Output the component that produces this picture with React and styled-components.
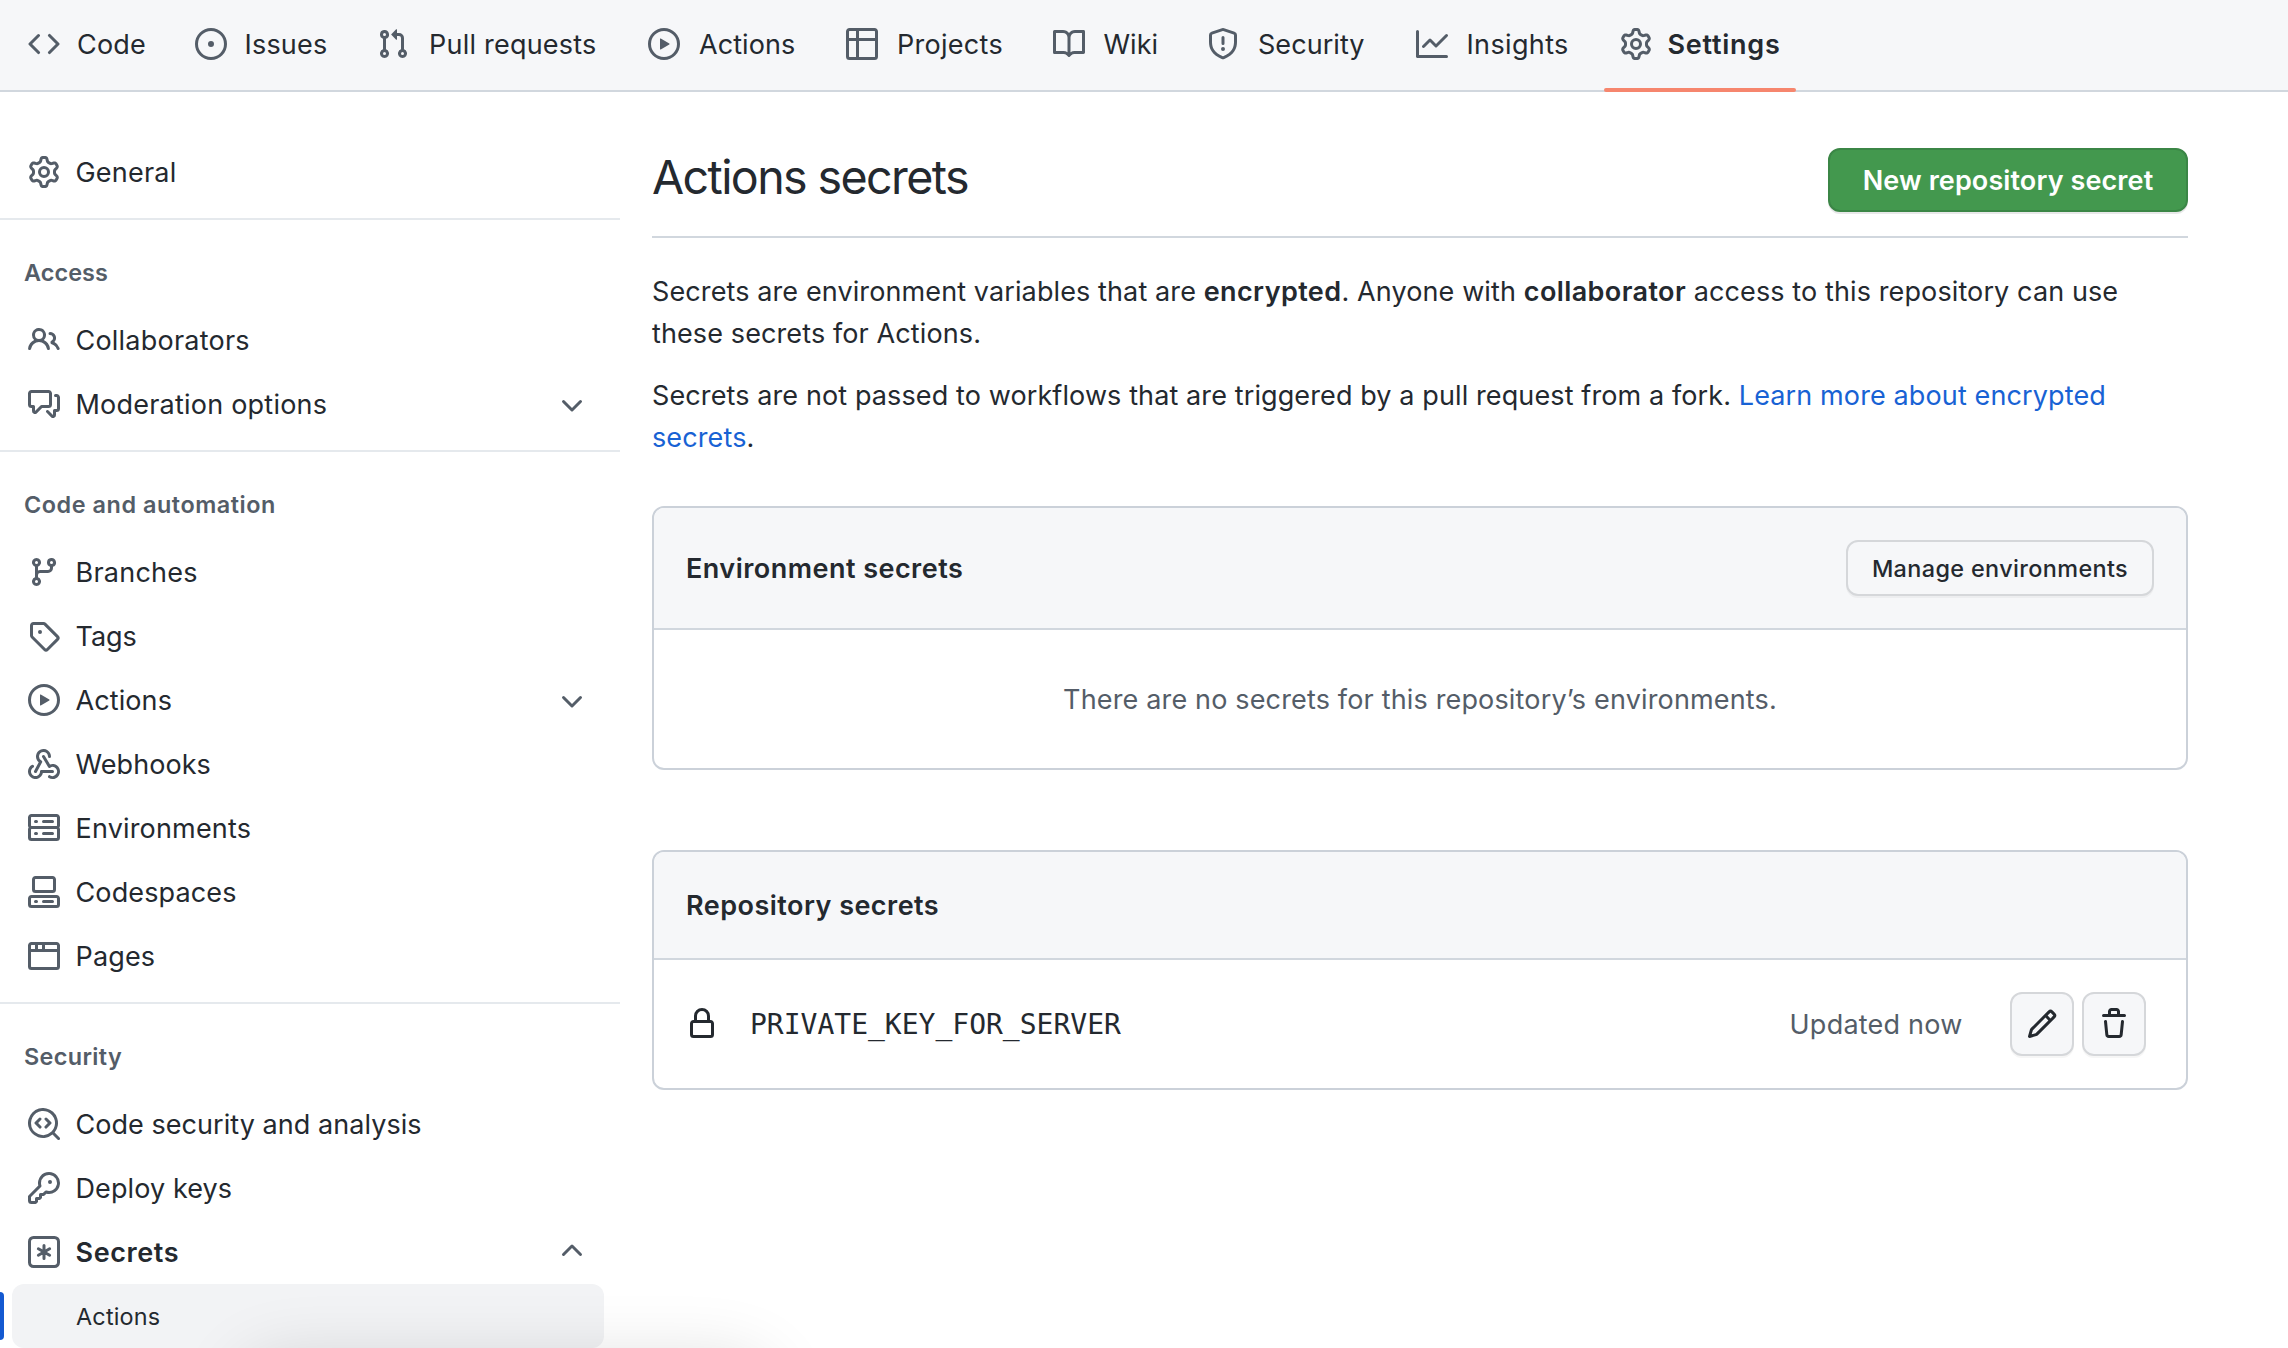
import React from "react";
import styled, { createGlobalStyle } from "styled-components";

const color = {
  text: "#24292f",
  muted: "#545d68",
  canvas: "#ffffff",
  subtle: "#f6f7f9",
  border: "#d1d7de",
  boxBorder: "#cbd1d9",
  divider: "#e5e9ed",
  link: "#1862d4",
  accent: "#1459d1",
  green: "#43984e",
  greenBorder: "#3b8646",
  coral: "#f6866e",
  control: "#d5d7da",
};

const sans = `Inter, "Liberation Sans", sans-serif`;
const mono = `"DejaVu Sans Mono", "Liberation Mono", monospace`;

const GlobalStyle = createGlobalStyle`
  *, *::before, *::after { box-sizing: border-box; }
  body {
    margin: 0;
    background: ${color.canvas};
    color: ${color.text};
    font: 400 27px/42px ${sans};
    overflow: hidden;
  }
  h1, h2, h3, p, ul { margin: 0; padding: 0; font-weight: inherit; font-size: inherit; }
  ul { list-style: none; }
  a { color: inherit; text-decoration: none; }
`;

/* ---------- icons (16 unit grid, drawn at 32px) ---------- */

const paths = {
  code: "M4.72 3.22a.75.75 0 011.06 1.06L2.06 8l3.72 3.72a.75.75 0 11-1.06 1.06L.47 8.53a.75.75 0 010-1.06l4.25-4.25zm6.56 0a.75.75 0 10-1.06 1.06L13.94 8l-3.72 3.72a.75.75 0 101.06 1.06l4.25-4.25a.75.75 0 000-1.06l-4.25-4.25z",
  issue: "M8 9.5a1.5 1.5 0 100-3 1.5 1.5 0 000 3zM8 0a8 8 0 100 16A8 8 0 008 0zM1.5 8a6.5 6.5 0 1113 0 6.5 6.5 0 01-13 0z",
  pull: "M7.177 3.073L9.573.677A.25.25 0 0110 .854v4.792a.25.25 0 01-.427.177L7.177 3.427a.25.25 0 010-.354zM3.75 2.5a.75.75 0 100 1.5.75.75 0 000-1.5zm-2.25.75a2.25 2.25 0 113 2.122v5.256a2.251 2.251 0 11-1.5 0V5.372A2.25 2.25 0 011.5 3.25zM11 2.5h-1V4h1a1 1 0 011 1v5.628a2.251 2.251 0 101.5 0V5A2.5 2.5 0 0011 2.5zm1 10.25a.75.75 0 111.5 0 .75.75 0 01-1.5 0zM3.75 12a.75.75 0 100 1.5.75.75 0 000-1.5z",
  play: "M1.5 8a6.5 6.5 0 1113 0 6.5 6.5 0 01-13 0zM8 0a8 8 0 100 16A8 8 0 008 0zM6.379 5.227A.25.25 0 006 5.442v5.117a.25.25 0 00.379.214l4.264-2.559a.25.25 0 000-.428L6.379 5.227z",
  table: "M0 1.75C0 .784.784 0 1.75 0h12.5C15.216 0 16 .784 16 1.75v12.5A1.75 1.75 0 0114.25 16H1.75A1.75 1.75 0 010 14.25V1.75zM1.5 6.5v7.75c0 .138.112.25.25.25H5v-8H1.5zM5 5V1.5H1.75a.25.25 0 00-.25.25V5H5zm1.5 1.5v8h7.75a.25.25 0 00.25-.25V6.5h-8zm8-1.5V1.75a.25.25 0 00-.25-.25H6.5V5h8z",
  book: "M0 1.75A.75.75 0 01.75 1h4.253c1.227 0 2.317.59 3 1.501A3.744 3.744 0 0111.006 1h4.245a.75.75 0 01.75.75v10.5a.75.75 0 01-.75.75h-4.507a2.25 2.25 0 00-1.591.659l-.622.621a.75.75 0 01-1.06 0l-.622-.621A2.25 2.25 0 005.258 13H.75a.75.75 0 01-.75-.75V1.75zm8.755 3a2.25 2.25 0 012.25-2.25H14.5v9h-3.757c-.71 0-1.4.201-1.992.572l.004-7.322zm-1.504 7.324l.004-5.073-.002-2.253A2.25 2.25 0 005.003 2.5H1.5v9h3.757a3.75 3.75 0 011.994.574z",
  shield: "M7.467.133a1.75 1.75 0 011.066 0l5.25 1.68A1.75 1.75 0 0115 3.48V7c0 1.566-.32 3.182-1.303 4.682-.983 1.498-2.585 2.813-5.032 3.855a1.7 1.7 0 01-1.33 0c-2.447-1.042-4.049-2.357-5.032-3.855C1.32 10.182 1 8.566 1 7V3.48a1.75 1.75 0 011.217-1.667l5.25-1.68zm.61 1.429a.25.25 0 00-.153 0l-5.25 1.68a.25.25 0 00-.174.238V7c0 1.358.275 2.666 1.057 3.86.784 1.194 2.121 2.34 4.366 3.297a.2.2 0 00.154 0c2.245-.956 3.582-2.104 4.366-3.298C13.225 9.666 13.5 8.36 13.5 7V3.48a.25.25 0 00-.174-.238l-5.25-1.68zM8.75 4.75a.75.75 0 00-1.5 0v3a.75.75 0 001.5 0v-3zM9 10.5a1 1 0 11-2 0 1 1 0 012 0z",
  graph: "M1.5 1.75a.75.75 0 00-1.5 0v12.5c0 .414.336.75.75.75h14.5a.75.75 0 000-1.5H1.5V1.75zm14.28 2.53a.75.75 0 00-1.06-1.06L10 7.94 7.53 5.47a.75.75 0 00-1.06 0L3.22 8.72a.75.75 0 001.06 1.06L7 7.06l2.47 2.47a.75.75 0 001.06 0l5.25-5.25z",
  gear: "M8 0a8.2 8.2 0 0 1 .701.031C9.444.095 9.99.645 10.16 1.29l.288 1.107c.018.066.079.158.212.224.231.114.454.243.668.386.123.082.233.09.299.071l1.103-.303c.644-.176 1.392.021 1.82.63.27.385.506.792.704 1.218.315.675.111 1.422-.364 1.891l-.814.806c-.049.048-.098.147-.088.294.016.257.016.515 0 .772-.01.147.038.246.088.294l.814.806c.475.469.679 1.216.364 1.891a7.977 7.977 0 0 1-.704 1.217c-.428.61-1.176.807-1.82.63l-1.102-.302c-.067-.019-.177-.011-.3.071a5.909 5.909 0 0 1-.668.386c-.133.066-.194.158-.211.224l-.29 1.106c-.168.646-.715 1.196-1.458 1.26a8.006 8.006 0 0 1-1.402 0c-.743-.064-1.289-.614-1.458-1.26l-.289-1.106c-.018-.066-.079-.158-.212-.224a5.738 5.738 0 0 1-.668-.386c-.123-.082-.233-.09-.299-.071l-1.103.303c-.644.176-1.392-.021-1.82-.63a8.12 8.12 0 0 1-.704-1.218c-.315-.675-.111-1.422.363-1.891l.815-.806c.05-.048.098-.147.088-.294a6.214 6.214 0 0 1 0-.772c.01-.147-.038-.246-.088-.294l-.815-.806C.635 6.045.431 5.298.746 4.623a7.92 7.92 0 0 1 .704-1.217c.428-.61 1.176-.807 1.82-.63l1.102.302c.067.019.177.011.3-.071.214-.143.437-.272.668-.386.133-.066.194-.158.211-.224l.29-1.106C6.009.645 6.556.095 7.299.03 7.53.01 7.764 0 8 0Zm-.571 1.525c-.036.003-.108.036-.137.146l-.289 1.105c-.147.561-.549.967-.998 1.189-.173.086-.34.183-.5.29-.417.278-.97.423-1.529.27l-1.103-.303c-.109-.03-.175.016-.195.045-.22.312-.412.644-.573.99-.014.031-.021.11.059.19l.815.806c.411.406.562.957.53 1.456a4.709 4.709 0 0 0 0 .582c.032.499-.119 1.05-.53 1.456l-.815.806c-.081.08-.073.159-.059.19.162.346.353.677.573.989.02.03.085.076.195.046l1.102-.303c.56-.153 1.113-.008 1.53.27.161.107.328.204.501.29.447.222.85.629.997 1.189l.289 1.105c.029.109.101.143.137.146a6.6 6.6 0 0 0 1.142 0c.036-.003.108-.036.137-.146l.289-1.105c.147-.561.549-.967.998-1.189.173-.086.34-.183.5-.29.417-.278.97-.423 1.529-.27l1.103.303c.109.029.175-.016.195-.045.22-.313.411-.644.573-.99.014-.031.021-.11-.059-.19l-.815-.806c-.411-.406-.562-.957-.53-1.456a4.709 4.709 0 0 0 0-.582c-.032-.499.119-1.05.53-1.456l.815-.806c.081-.08.073-.159.059-.19a6.464 6.464 0 0 0-.573-.989c-.02-.03-.085-.076-.195-.046l-1.102.303c-.56.153-1.113.008-1.53-.27a4.44 4.44 0 0 0-.501-.29c-.447-.222-.85-.629-.997-1.189l-.289-1.105c-.029-.11-.101-.143-.137-.146a6.6 6.6 0 0 0-1.142 0ZM11 8a3 3 0 1 1-6 0 3 3 0 0 1 6 0ZM9.5 8a1.5 1.5 0 1 0-3.001.001A1.5 1.5 0 0 0 9.5 8Z",
  people: "M5.5 3.5a2 2 0 100 4 2 2 0 000-4zM2 5.5a3.5 3.5 0 115.898 2.549 5.507 5.507 0 013.034 4.084.75.75 0 11-1.482.235 4.001 4.001 0 00-7.9 0 .75.75 0 01-1.482-.236A5.507 5.507 0 013.102 8.05 3.49 3.49 0 012 5.5zM11 4a.75.75 0 100 1.5 1.5 1.5 0 01.666 2.844.75.75 0 00-.416.672v.352a.75.75 0 00.574.73c1.2.289 2.162 1.2 2.522 2.372a.75.75 0 101.434-.44 5.01 5.01 0 00-2.56-3.012A3 3 0 0011 4z",
  discussion: "M1.75 1h8.5c.966 0 1.75.784 1.75 1.75v5.5A1.75 1.75 0 0 1 10.25 10H7.061l-2.574 2.573A1.458 1.458 0 0 1 2 11.543V10h-.25A1.75 1.75 0 0 1 0 8.25v-5.5C0 1.784.784 1 1.75 1ZM1.5 2.75v5.5c0 .138.112.25.25.25h1a.75.75 0 0 1 .75.75v2.19l2.72-2.72a.749.749 0 0 1 .53-.22h3.5a.25.25 0 0 0 .25-.25v-5.5a.25.25 0 0 0-.25-.25h-8.5a.25.25 0 0 0-.25.25Zm13 2a.25.25 0 0 0-.25-.25h-.5a.75.75 0 0 1 0-1.5h.5c.966 0 1.75.784 1.75 1.75v5.5A1.75 1.75 0 0 1 14.25 12H14v1.543a1.458 1.458 0 0 1-2.487 1.03L9.22 12.28a.749.749 0 0 1 .326-1.275.749.749 0 0 1 .734.215l2.22 2.22v-2.19a.75.75 0 0 1 .75-.75h1a.25.25 0 0 0 .25-.25Z",
  chevronDown: "M12.78 6.22a.75.75 0 010 1.06l-4.25 4.25a.75.75 0 01-1.06 0L3.22 7.28a.75.75 0 011.06-1.06L8 9.94l3.72-3.72a.75.75 0 011.06 0z",
  chevronUp: "M3.22 9.78a.75.75 0 010-1.06l4.25-4.25a.75.75 0 011.06 0l4.25 4.25a.75.75 0 01-1.06 1.06L8 6.06 4.28 9.78a.75.75 0 01-1.06 0z",
  branch: "M11.75 2.5a.75.75 0 100 1.5.75.75 0 000-1.5zm-2.25.75a2.25 2.25 0 113 2.122V6A2.5 2.5 0 0110 8.5H6a1 1 0 00-1 1v1.128a2.251 2.251 0 11-1.5 0V5.372a2.25 2.25 0 111.5 0v1.836A2.492 2.492 0 016 7h4a1 1 0 001-1v-.628A2.25 2.25 0 019.5 3.25zM4.25 12a.75.75 0 100 1.5.75.75 0 000-1.5zM3.5 3.25a.75.75 0 111.5 0 .75.75 0 01-1.5 0z",
  tag: "M1 7.775V2.75C1 1.784 1.784 1 2.75 1h5.025c.464 0 .91.184 1.238.513l6.25 6.25a1.75 1.75 0 0 1 0 2.474l-5.026 5.026a1.75 1.75 0 0 1-2.474 0l-6.25-6.25A1.752 1.752 0 0 1 1 7.775Zm1.5 0c0 .066.026.13.073.177l6.25 6.25a.25.25 0 0 0 .354 0l5.025-5.025a.25.25 0 0 0 0-.354l-6.25-6.25a.25.25 0 0 0-.177-.073H2.75a.25.25 0 0 0-.25.25ZM6 5a1 1 0 1 1 0 2 1 1 0 0 1 0-2Z",
  webhook: "M5.5 4.25a2.25 2.25 0 0 1 4.5 0 .75.75 0 0 0 1.5 0 3.75 3.75 0 1 0-6.14 2.889l-2.272 4.258a.75.75 0 0 0 1.324.706L7 7.25a.75.75 0 0 0-.309-1.015A2.25 2.25 0 0 1 5.5 4.25Z|M7.364 3.607a.75.75 0 0 1 1.03.257l2.608 4.349a3.75 3.75 0 1 1-.628 6.785.75.75 0 0 1 .752-1.299 2.25 2.25 0 1 0-.033-3.88.75.75 0 0 1-1.03-.256L7.107 4.636a.75.75 0 0 1 .257-1.03Z|M2.9 8.776A.75.75 0 0 1 2.625 9.8 2.25 2.25 0 1 0 6 11.75a.75.75 0 0 1 .75-.751h5.5a.75.75 0 0 1 0 1.5H7.425a3.751 3.751 0 1 1-5.55-3.998.75.75 0 0 1 1.024.274Z",
  server: "M1.75 1h12.5c.966 0 1.75.784 1.75 1.75v4c0 .372-.116.717-.314 1 .198.283.314.628.314 1v4a1.75 1.75 0 0 1-1.75 1.75H1.75A1.75 1.75 0 0 1 0 12.75v-4c0-.358.109-.707.314-1a1.739 1.739 0 0 1-.314-1v-4C0 1.784.784 1 1.75 1ZM1.5 2.75v4c0 .138.112.25.25.25h12.5a.25.25 0 0 0 .25-.25v-4a.25.25 0 0 0-.25-.25H1.75a.25.25 0 0 0-.25.25Zm.25 5.75a.25.25 0 0 0-.25.25v4c0 .138.112.25.25.25h12.5a.25.25 0 0 0 .25-.25v-4a.25.25 0 0 0-.25-.25ZM7 4.75A.75.75 0 0 1 7.75 4h4.5a.75.75 0 0 1 0 1.5h-4.5A.75.75 0 0 1 7 4.75ZM7.75 10h4.5a.75.75 0 0 1 0 1.5h-4.5a.75.75 0 0 1 0-1.5ZM3 4.75A.75.75 0 0 1 3.75 4h.5a.75.75 0 0 1 0 1.5h-.5A.75.75 0 0 1 3 4.75ZM3.75 10h.5a.75.75 0 0 1 0 1.5h-.5a.75.75 0 0 1 0-1.5Z",
  codespaces: "M0 11.25c0-.966.784-1.75 1.75-1.75h12.5c.966 0 1.75.784 1.75 1.75v3A1.75 1.75 0 0 1 14.25 16H1.75A1.75 1.75 0 0 1 0 14.25Zm2-9.5C2 .784 2.784 0 3.75 0h8.5C13.216 0 14 .784 14 1.75v5a1.75 1.75 0 0 1-1.75 1.75h-8.5A1.75 1.75 0 0 1 2 6.75Zm1.75-.25a.25.25 0 0 0-.25.25v5c0 .138.112.25.25.25h8.5a.25.25 0 0 0 .25-.25v-5a.25.25 0 0 0-.25-.25Zm-2 9.5a.25.25 0 0 0-.25.25v3c0 .138.112.25.25.25h12.5a.25.25 0 0 0 .25-.25v-3a.25.25 0 0 0-.25-.25ZM7 12.75a.75.75 0 0 1 .75-.75h4.5a.75.75 0 0 1 0 1.5h-4.5a.75.75 0 0 1-.75-.75Zm-4 0a.75.75 0 0 1 .75-.75h.5a.75.75 0 0 1 0 1.5h-.5a.75.75 0 0 1-.75-.75Z",
  browser: "M0 2.75C0 1.784.784 1 1.75 1h12.5c.966 0 1.75.784 1.75 1.75v10.5A1.75 1.75 0 0 1 14.25 15H1.75A1.75 1.75 0 0 1 0 13.25ZM14.5 6h-13v7.25c0 .138.112.25.25.25h12.5a.25.25 0 0 0 .25-.25Zm-6-3.5v2h6V2.75a.25.25 0 0 0-.25-.25ZM5 2.5v2h2v-2Zm-3.25 0a.25.25 0 0 0-.25.25V4.5h2v-2Z",
  codescan: "M8.47 4.97a.75.75 0 0 0 0 1.06L9.94 7.5 8.47 8.97a.75.75 0 1 0 1.06 1.06l2-2a.75.75 0 0 0 0-1.06l-2-2a.75.75 0 0 0-1.06 0ZM6.53 6.03a.75.75 0 0 0-1.06-1.06l-2 2a.75.75 0 0 0 0 1.06l2 2a.75.75 0 1 0 1.06-1.06L5.06 7.5l1.47-1.47ZM12.246 13.307a7.501 7.501 0 1 1 1.06-1.06l2.474 2.473a.749.749 0 0 1-.326 1.275.749.749 0 0 1-.734-.215ZM1.5 7.5a6.002 6.002 0 0 0 3.608 5.504 6.002 6.002 0 0 0 6.486-1.117.748.748 0 0 1 .292-.293A6 6 0 1 0 1.5 7.5Z",
  key: "M10.5 0a5.499 5.499 0 1 1-1.288 10.848l-.932.932a.749.749 0 0 1-.53.22H7v.75a.749.749 0 0 1-.22.53l-.5.5a.749.749 0 0 1-.53.22H5v.75a.749.749 0 0 1-.22.53l-.5.5a.749.749 0 0 1-.53.22h-2A1.75 1.75 0 0 1 0 14.25v-2c0-.199.079-.389.22-.53l4.932-4.932A5.5 5.5 0 0 1 10.5 0Zm-4 5.5c-.001.431.069.86.205 1.269a.75.75 0 0 1-.181.768L1.5 12.56v1.69c0 .138.112.25.25.25h1.69l.06-.06v-1.19a.75.75 0 0 1 .75-.75h1.19l.06-.06v-1.19a.75.75 0 0 1 .75-.75h1.19l1.023-1.025a.75.75 0 0 1 .768-.18A4 4 0 1 0 6.5 5.5ZM11 6a1 1 0 1 1 0-2 1 1 0 0 1 0 2Z",
  lock: "M4 4a4 4 0 0 1 8 0v2h.25c.966 0 1.75.784 1.75 1.75v5.5A1.75 1.75 0 0 1 12.25 15h-8.5A1.75 1.75 0 0 1 2 13.25v-5.5C2 6.784 2.784 6 3.75 6H4Zm8.25 3.5h-8.5a.25.25 0 0 0-.25.25v5.5c0 .138.112.25.25.25h8.5a.25.25 0 0 0 .25-.25v-5.5a.25.25 0 0 0-.25-.25ZM10.5 6V4a2.5 2.5 0 1 0-5 0v2Z",
  pencil: "M11.013 1.427a1.75 1.75 0 0 1 2.474 0l1.086 1.086a1.75 1.75 0 0 1 0 2.474l-8.61 8.61c-.21.21-.47.364-.756.445l-3.251.93a.75.75 0 0 1-.927-.928l.929-3.25c.081-.286.235-.547.445-.758l8.61-8.61Zm.176 4.823L9.75 4.81l-6.286 6.287a.253.253 0 0 0-.064.108l-.558 1.953 1.953-.558a.253.253 0 0 0 .108-.064Zm1.238-3.763a.25.25 0 0 0-.354 0L10.811 3.75l1.439 1.44 1.263-1.263a.25.25 0 0 0 0-.354Z",
  trash: "M11 1.75V3h2.25a.75.75 0 0 1 0 1.5H2.75a.75.75 0 0 1 0-1.5H5V1.75C5 .784 5.784 0 6.75 0h2.5C10.216 0 11 .784 11 1.75ZM4.496 6.675l.66 6.6a.25.25 0 0 0 .249.225h5.19a.25.25 0 0 0 .249-.225l.66-6.6a.75.75 0 0 1 1.492.149l-.66 6.6A1.748 1.748 0 0 1 10.595 15h-5.19a1.75 1.75 0 0 1-1.741-1.575l-.66-6.6a.75.75 0 1 1 1.492-.15ZM6.5 1.75V3h3V1.75a.25.25 0 0 0-.25-.25h-2.5a.25.25 0 0 0-.25.25Z",
};

const Svg = styled.svg`
  display: block;
  flex: none;
  width: 32px;
  height: 32px;
  fill: ${(p) => (p.$strong ? color.text : color.muted)};
`;

function Icon({ name, strong }) {
  if (name === "asterisk") {
    return (
      <Svg viewBox="0 0 16 16" aria-hidden="true">
        <path
          fillRule="evenodd"
          d="M0 2.75A2.75 2.75 0 012.75 0h10.5A2.75 2.75 0 0116 2.75v10.5A2.75 2.75 0 0113.25 16H2.75A2.75 2.75 0 010 13.25V2.75zM2.75 1.5c-.69 0-1.25.56-1.25 1.25v10.5c0 .69.56 1.25 1.25 1.25h10.5c.69 0 1.25-.56 1.25-1.25V2.75c0-.69-.56-1.25-1.25-1.25H2.75z"
        />
        <path
          d="M8 4.75v6.5M5.19 6.375l5.62 3.25M10.81 6.375l-5.62 3.25"
          stroke={color.muted}
          strokeWidth="1.5"
          strokeLinecap="round"
        />
      </Svg>
    );
  }
  return (
    <Svg viewBox="0 0 16 16" aria-hidden="true" $strong={strong}>
      {paths[name].split("|").map((d) => (
        <path key={d} fillRule="evenodd" d={d} />
      ))}
    </Svg>
  );
}

/* ---------- top navigation ---------- */

const TabBar = styled.nav`
  display: flex;
  gap: 16px;
  height: 92px;
  padding-left: 12px;
  background: ${color.subtle};
  box-shadow: inset 0 -2px 0 ${color.border};
`;

const Tab = styled.a`
  position: relative;
  display: flex;
  align-items: center;
  gap: ${(p) => p.$gap}px;
  width: ${(p) => p.$width}px;
  padding: 0 0 4px 16px;
  white-space: nowrap;
  letter-spacing: ${(p) => p.$track}px;
  font-weight: ${(p) => (p.$current ? 600 : 400)};

  &::after {
    content: "";
    display: ${(p) => (p.$current ? "block" : "none")};
    position: absolute;
    left: 0;
    right: 0;
    bottom: 0;
    height: 4px;
    border-radius: 2px;
    background: ${color.coral};
  }
`;

const TabLabel = styled.span`
  padding-top: 2px;
`;

const tabs = [
  { icon: "code", label: "Code", width: 151, gap: 17, track: 0.19 },
  { icon: "issue", label: "Issues", width: 166, gap: 17.5, track: 0.2 },
  { icon: "pull", label: "Pull requests", width: 255, gap: 20, track: 0.22 },
  { icon: "play", label: "Actions", width: 182, gap: 19, track: 0.07 },
  { icon: "table", label: "Projects", width: 191, gap: 19, track: 0.28 },
  { icon: "book", label: "Wiki", width: 138, gap: 18.5, track: 0.01 },
  { icon: "shield", label: "Security", width: 193, gap: 19, track: 0.05 },
  { icon: "graph", label: "Insights", width: 187.5, gap: 18.5, track: 0.36 },
  { icon: "gear", label: "Settings", width: 192, gap: 16, track: 0.75, current: true },
];

/* ---------- sidebar ---------- */

const Columns = styled.div`
  display: flex;
  align-items: flex-start;
  gap: 32px;
`;

const Sidebar = styled.aside`
  flex: none;
  width: 620px;
  padding-top: 48px;
`;

const Group = styled.section`
  & + & {
    margin-top: 14px;
    border-top: 2px solid ${color.divider};
  }
`;

const GroupTitle = styled.h3`
  padding: 33px 24px 15px;
  font-size: 23.4px;
  font-weight: 600;
  line-height: 40px;
  letter-spacing: ${(p) => p.$track}px;
  color: ${color.muted};
`;

const SideLink = styled.a`
  display: flex;
  align-items: center;
  gap: 15.5px;
  height: 64px;
  padding: 0 32px 0 28px;
  font-weight: ${(p) => (p.$bold ? 600 : 400)};
  letter-spacing: ${(p) => p.$track}px;
`;

const SideLabel = styled.span`
  flex: 1;
  padding-top: 2px;
`;

const SubRow = styled.div`
  display: flex;
  align-items: center;
  gap: 8px;
  height: 64px;
`;

const CurrentMark = styled.span`
  width: 4px;
  height: 48px;
  border-radius: 0 6px 6px 0;
  background: ${color.accent};
`;

const SubLink = styled.a`
  display: flex;
  align-items: center;
  width: 592px;
  height: 64px;
  padding: 2px 0 0 64px;
  border-radius: 12px;
  background: #f2f3f5;
  font-size: 23.4px;
  letter-spacing: 0.2px;
`;

const groups = [
  { items: [{ icon: "gear", label: "General", track: 0.22 }] },
  {
    title: "Access",
    track: 0.08,
    items: [
      { icon: "people", label: "Collaborators", track: 0.22 },
      { icon: "discussion", label: "Moderation options", track: 0.22, chevron: "chevronDown" },
    ],
  },
  {
    title: "Code and automation",
    track: 0.55,
    items: [
      { icon: "branch", label: "Branches", track: 0.25 },
      { icon: "tag", label: "Tags", track: -0.06 },
      { icon: "play", label: "Actions", track: 0.1, chevron: "chevronDown" },
      { icon: "webhook", label: "Webhooks", track: 0.05 },
      { icon: "server", label: "Environments", track: 0.18 },
      { icon: "codespaces", label: "Codespaces", track: 0.13 },
      { icon: "browser", label: "Pages", track: 0.15 },
    ],
  },
  {
    title: "Security",
    track: 0.37,
    items: [
      { icon: "codescan", label: "Code security and analysis", track: 0.05 },
      { icon: "key", label: "Deploy keys", track: 0.1 },
      { icon: "asterisk", label: "Secrets", track: 0.6, chevron: "chevronUp", bold: true, sub: "Actions" },
    ],
  },
];

function SideItem({ item }) {
  return (
    <li>
      <SideLink $bold={item.bold} $track={item.track}>
        <Icon name={item.icon} />
        <SideLabel>{item.label}</SideLabel>
        {item.chevron && <Icon name={item.chevron} />}
      </SideLink>
      {item.sub && (
        <SubRow>
          <CurrentMark />
          <SubLink>{item.sub}</SubLink>
        </SubRow>
      )}
    </li>
  );
}

/* ---------- main column ---------- */

const Main = styled.main`
  width: 1536px;
  padding-top: 56px;
`;

const PageHeader = styled.header`
  display: flex;
  align-items: center;
  justify-content: space-between;
  height: 90px;
  padding-bottom: 24px;
  border-bottom: 2px solid ${color.border};
`;

const PageTitle = styled.h1`
  padding-bottom: 6px;
  font-size: 46.6px;
  line-height: 58px;
  letter-spacing: -1.61px;
`;

const Button = styled.button`
  display: flex;
  align-items: center;
  justify-content: center;
  border: 2px solid ${color.control};
  border-radius: 12px;
  background: ${color.subtle};
  box-shadow: 0 2px 0 rgba(27, 31, 36, 0.04);
  color: ${color.text};
  font-family: ${sans};
  font-weight: 500;
  padding: 0;
  white-space: nowrap;
`;

const PrimaryButton = styled(Button)`
  width: 360px;
  height: 64px;
  border-color: ${color.greenBorder};
  background: ${color.green};
  box-shadow: 0 2px 0 rgba(27, 31, 36, 0.1);
  color: #fff;
  font-size: 27px;
  font-weight: 600;
  letter-spacing: 0.1px;
`;

const SmallButton = styled(Button)`
  width: 308px;
  height: 56px;
  font-size: 23.4px;
  letter-spacing: 0.38px;
`;

const IconButton = styled(Button)`
  width: 64px;
  height: 64px;
`;

const Intro = styled.div`
  display: flex;
  flex-direction: column;
  gap: 20px;
  padding-top: 33px;
  letter-spacing: 0.11px;
`;

const Strong = styled.strong`
  font-weight: 600;
  letter-spacing: 0.4px;
`;

const Link = styled.a`
  color: ${color.link};
  letter-spacing: 0.12px;
`;

const Box = styled.section`
  margin-top: ${(p) => p.$offset}px;
  border: 2px solid ${color.boxBorder};
  border-radius: 12px;
  overflow: hidden;
`;

const BoxHeader = styled.div`
  display: flex;
  align-items: center;
  justify-content: space-between;
  height: ${(p) => p.$height}px;
  padding: 0 32px;
  border-bottom: 2px solid ${color.border};
  background: ${color.subtle};
`;

const BoxTitle = styled.h2`
  padding-top: 2px;
  font-weight: 600;
  letter-spacing: 0.47px;
`;

const Empty = styled.p`
  display: flex;
  align-items: center;
  justify-content: center;
  height: 138px;
  padding-top: 2px;
  color: ${color.muted};
  letter-spacing: 0.16px;
`;

const SecretRow = styled.div`
  display: flex;
  align-items: center;
  height: 128px;
  padding: 0 40px 0 32px;
`;

const SecretName = styled.code`
  flex: 1;
  margin-left: 32px;
  padding-top: 2px;
  font: 400 28px/42px ${mono};
`;

const Updated = styled.span`
  margin-right: 47.5px;
  padding-top: 2px;
  color: ${color.muted};
  letter-spacing: 0.22px;
`;

const ButtonPair = styled.div`
  display: flex;
  gap: 8px;
`;

/* Soft shadow rising from a window that sits just under the viewport. */
const WindowShadow = styled.div`
  position: fixed;
  left: 240px;
  top: 1360px;
  width: 530px;
  height: 200px;
  border-radius: 40px;
  box-shadow: 0 0 70px rgba(0, 0, 0, 0.14);
  pointer-events: none;
`;

export default function App() {
  return (
    <>
      <GlobalStyle />
      <TabBar>
        {tabs.map((t) => (
          <Tab key={t.label} $width={t.width} $gap={t.gap} $track={t.track} $current={t.current}>
            <Icon name={t.icon} />
            <TabLabel>{t.label}</TabLabel>
          </Tab>
        ))}
      </TabBar>
      <Columns>
        <Sidebar>
          {groups.map((g, i) => (
            <Group key={i}>
              {g.title && <GroupTitle $track={g.track}>{g.title}</GroupTitle>}
              <ul>
                {g.items.map((item) => (
                  <SideItem key={item.label} item={item} />
                ))}
              </ul>
            </Group>
          ))}
        </Sidebar>
        <Main>
          <PageHeader>
            <PageTitle>Actions secrets</PageTitle>
            <PrimaryButton>New repository secret</PrimaryButton>
          </PageHeader>
          <Intro>
            <p>
              Secrets are environment variables that are <Strong>encrypted</Strong>. Anyone with{" "}
              <Strong>collaborator</Strong> access to this repository can use these secrets for Actions.
            </p>
            <p>
              Secrets are not passed to workflows that are triggered by a pull request from a fork.{" "}
              <Link>Learn more about encrypted secrets</Link>.
            </p>
          </Intro>
          <Box $offset={47}>
            <BoxHeader $height={122}>
              <BoxTitle>Environment secrets</BoxTitle>
              <SmallButton>Manage environments</SmallButton>
            </BoxHeader>
            <Empty>There are no secrets for this repository’s environments.</Empty>
          </Box>
          <Box $offset={80}>
            <BoxHeader $height={108}>
              <BoxTitle>Repository secrets</BoxTitle>
            </BoxHeader>
            <SecretRow>
              <Icon name="lock" strong />
              <SecretName>PRIVATE_KEY_FOR_SERVER</SecretName>
              <Updated>Updated now</Updated>
              <ButtonPair>
                <IconButton aria-label="Edit">
                  <Icon name="pencil" strong />
                </IconButton>
                <IconButton aria-label="Delete">
                  <Icon name="trash" strong />
                </IconButton>
              </ButtonPair>
            </SecretRow>
          </Box>
        </Main>
      </Columns>
      <WindowShadow />
    </>
  );
}
